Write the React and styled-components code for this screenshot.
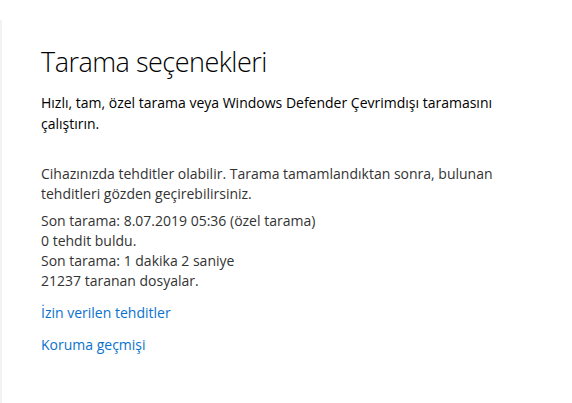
import styled, { createGlobalStyle } from "styled-components"

const GlobalStyle = createGlobalStyle`
    html, body {
        margin: 0;
        padding: 0;
        background: #ffffff;
    }
    body {
        font-family: "Open Sans", "Noto Sans", "Liberation Sans", sans-serif;
    }
`

export default function App() {
    return (
        <>
            <GlobalStyle />
            <Page>
                <Content>
                    <Title>Tarama seçenekleri</Title>
                    <Lead>
                        Hızlı, tam, özel tarama veya Windows Defender Çevrimdışı taramasını
                        <br />
                        çalıştırın.
                    </Lead>
                    <Info>
                        Cihazınızda tehditler olabilir. Tarama tamamlandıktan sonra, bulunan
                        <br />
                        tehditleri gözden geçirebilirsiniz.
                    </Info>
                    <Info>
                        Son tarama: 8.07.2019 05:36 (özel tarama)
                        <br />
                        0 tehdit buldu.
                        <br />
                        Son tarama: 1 dakika 2 saniye
                        <br />
                        21237 taranan dosyalar.
                    </Info>
                    <Links>
                        <Link href="#">İzin verilen tehditler</Link>
                        <Link href="#">Koruma geçmişi</Link>
                    </Links>
                </Content>
            </Page>
        </>
    )
}

const Page = styled.div`
    width: 572px;
    height: 403px;
    box-sizing: border-box;
    padding-top: 20px;
    overflow: hidden;
`

const Content = styled.div`
    height: 100%;
    box-sizing: border-box;
    border-left: 2px solid #f2f2f2;
    padding: 24px 0 0 39px;
    display: flex;
    flex-direction: column;
`

const Title = styled.h1`
    margin: 0 0 12px;
    font-size: 27px;
    font-weight: 300;
    line-height: 36px;
    color: #000000;
    letter-spacing: -0.5px;
`

const Lead = styled.p`
    margin: 0 0 30px;
    font-size: 14px;
    line-height: 21px;
    color: #000000;
`

const Info = styled.p`
    margin: 0 0 7px;
    font-size: 14px;
    line-height: 20px;
    color: #333333;
`

const Links = styled.div`
    margin-top: 5px;
    display: flex;
    flex-direction: column;
    align-items: flex-start;
    gap: 12px;
`

const Link = styled.a`
    font-size: 14px;
    line-height: 20px;
    color: #0a72cc;
    text-decoration: none;
`
